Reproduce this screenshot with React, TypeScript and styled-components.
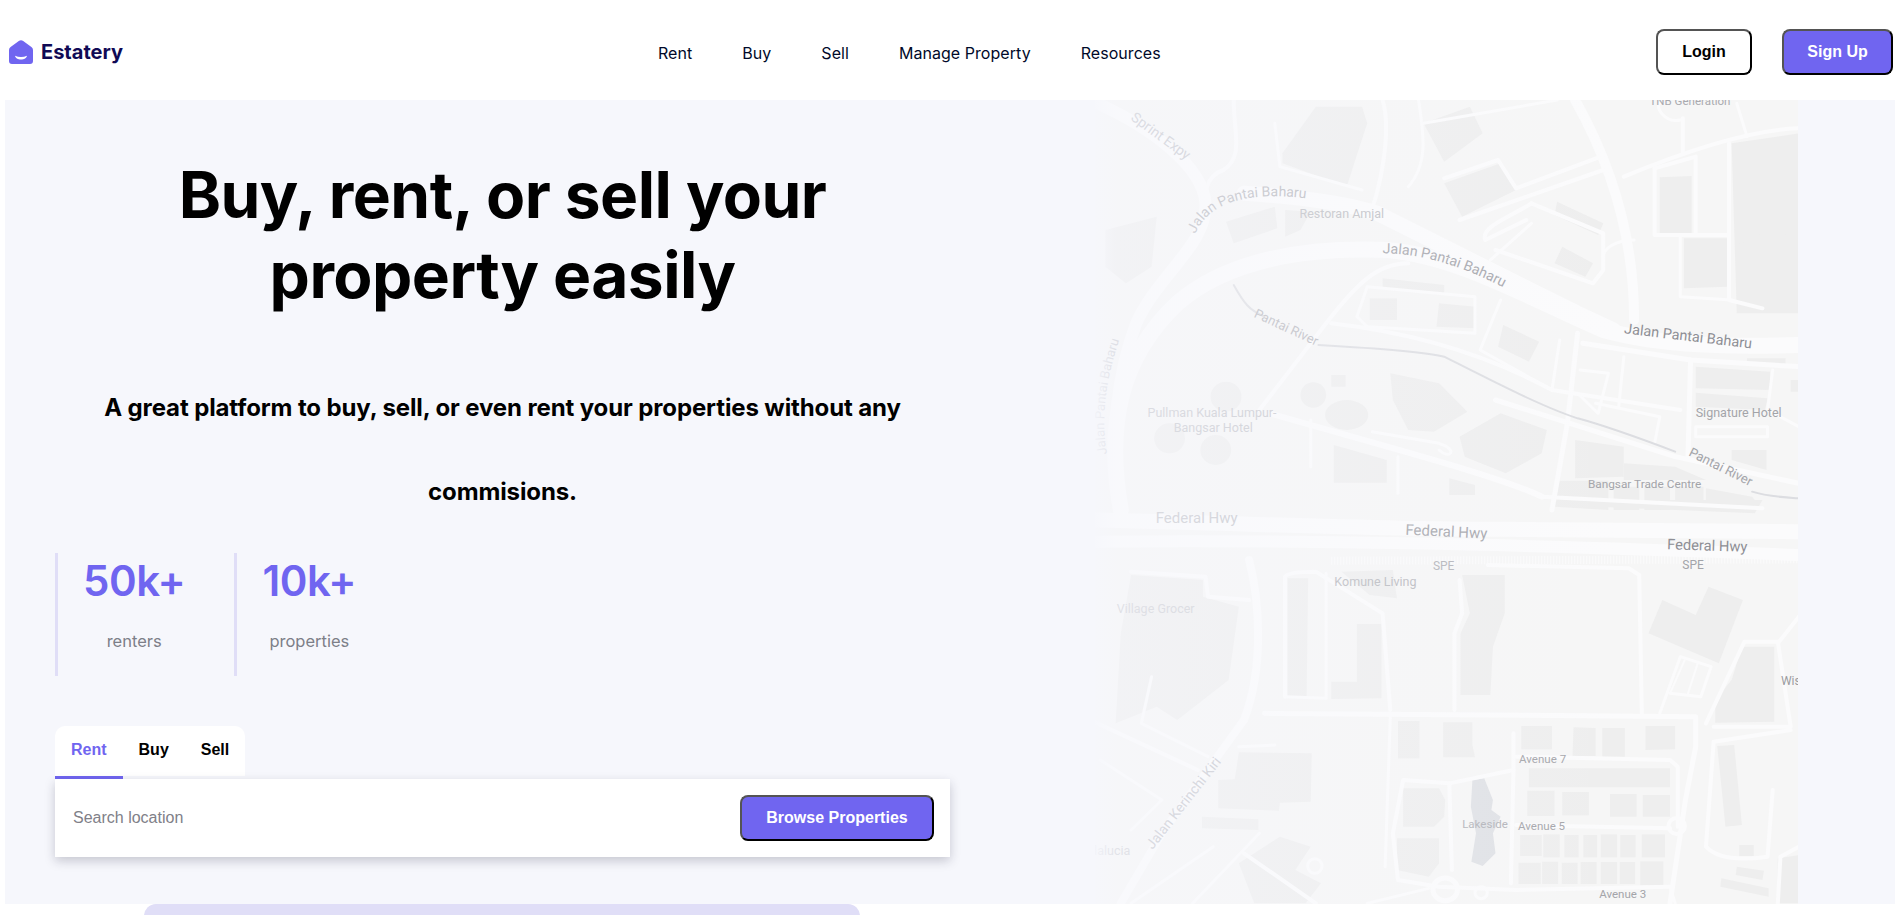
import styled, { createGlobalStyle } from "styled-components";

const GlobalStyle = createGlobalStyle`
    html, body {
        margin: 0;
        padding: 0;
        background: #fff;
        overflow: hidden;
    }
    * {
        box-sizing: border-box;
    }
`;

const Page = styled.div`
    height: 915px;
    overflow: hidden;
    font-family: "Inter", "Noto Sans", sans-serif;
`;

const Header = styled.header`
    display: grid;
    grid-template-columns: 649px 1fr auto;
    align-items: center;
    height: 100px;
    padding: 0 2px 0 9px;
    background: #fff;
`;

const Logo = styled.div`
    display: flex;
    align-items: center;
    gap: 8px;
    margin-top: 4px;
    color: #100a55;
    font-size: 20px;
    font-weight: 700;
`;

const Nav = styled.nav`
    display: flex;
    gap: 50px;
    margin-top: 5px;
    color: #000929;
    font-size: 16px;
    font-weight: 400;
`;

const NavLink = styled.span`
    letter-spacing: 0.05px;
`;

const Actions = styled.div`
    display: flex;
    gap: 30px;
    margin-top: 4px;
`;

const Button = styled.button<{ $primary?: boolean; $width: number }>`
    width: ${(p) => p.$width}px;
    height: 46px;
    border: 2px outset #000;
    border-radius: 8px;
    background: ${(p) => (p.$primary ? "#7065f0" : "#fff")};
    color: ${(p) => (p.$primary ? "#fff" : "#000")};
    font-family: "Liberation Sans", Arial, sans-serif;
    font-size: 16px;
    font-weight: 700;
`;

const Hero = styled.section`
    display: flex;
    height: 804px;
    margin-left: 5px;
    padding-left: 50px;
    background: #f6f7fc;
`;

const Intro = styled.div`
    display: flex;
    flex-direction: column;
    width: 895px;
    margin-right: 145px;
    padding-top: 55px;
`;

const Title = styled.h1`
    margin: 0 0 51px;
    color: #000;
    font-size: 64px;
    font-weight: 700;
    line-height: 80px;
    letter-spacing: -0.55px;
    text-align: center;
`;

const Lead = styled.p`
    margin: 0 0 19px;
    color: #000;
    font-size: 24px;
    font-weight: 700;
    line-height: 84px;
    letter-spacing: -0.12px;
    text-align: center;
`;

const Stats = styled.div`
    display: flex;
    gap: 24px;
    margin-bottom: 50px;
`;

const Stat = styled.div`
    display: flex;
    flex-direction: column;
    align-items: center;
    height: 123px;
    padding: 0 25px;
    border-left: 3px solid #e0def7;
`;

const StatValue = styled.span`
    margin-bottom: 20px;
    color: #7065f0;
    font-size: 42px;
    font-weight: 600;
    line-height: 56px;
    letter-spacing: -0.4px;
`;

const StatLabel = styled.span`
    color: #7d7f88;
    font-size: 16.5px;
    line-height: 24px;
`;

const Tabs = styled.div`
    display: flex;
    align-self: flex-start;
    height: 53px;
    border-radius: 10px 10px 0 0;
    background: #fff;
`;

const Tab = styled.button<{ $active?: boolean }>`
    padding: 0 16px 3px;
    border: 0;
    border-bottom: 3px solid ${(p) => (p.$active ? "#7065f0" : "#f6f7fc")};
    background: none;
    color: ${(p) => (p.$active ? "#7065f0" : "#000")};
    font-family: "Liberation Sans", Arial, sans-serif;
    font-size: 16px;
    font-weight: 700;
`;

const SearchCard = styled.div`
    display: flex;
    align-items: center;
    justify-content: space-between;
    height: 78px;
    padding: 0 16px;
    background: #fff;
    box-shadow: 0 4px 10px rgba(30, 30, 60, 0.22);
`;

const SearchInput = styled.input`
    width: 400px;
    border: 0;
    outline: 0;
    background: none;
    color: #333;
    font-family: "Liberation Sans", Arial, sans-serif;
    font-size: 16px;
    &::placeholder {
        color: #808088;
        opacity: 1;
    }
`;

const PromoStrip = styled.div`
    width: 716px;
    height: 40px;
    margin-left: 144px;
    border-radius: 12px 12px 0 0;
    background: #e0def7;
`;

const MapArt = styled.svg`
    flex: none;
    display: block;
    width: 703px;
    height: 804px;
`;

const SX = 0.5133;
const SY = 1 / 3;

// zoomed reference coords -> svg px
const toSvg = (x: number, y: number, base: number): [number, number] => [x * SX - 5, y * SY + base];

const BUILDINGS_TOP = [
    "650,100 740,50 765,130 690,215",
    "690,280 800,220 830,300 725,380",
    "910,335 1000,400 990,435 905,375",
    "920,470 980,520 965,560 905,520",
    "805,705 875,755 855,815 795,770",
    "1110,262 1172,258 1172,430 1110,430",
    "1157,445 1243,445 1243,590 1157,595",
    "1250,160 1381,130 1381,670 1260,670",
    "1263,460 1305,455 1305,635 1263,635",
    "1305,433 1355,433 1355,585 1305,585",
    "1180,830 1325,845 1325,900 1180,895",
    "1180,908 1320,925 1315,960 1180,950",
    "945,1050 1040,1070 1040,1160 945,1165",
    "1040,1120 1140,1130 1200,1170 1040,1170",
    "910,1172 1010,1172 1010,1260 905,1250",
    "1020,1190 1070,1190 1070,1260 1020,1260",
    "1080,1190 1130,1190 1130,1260 1080,1260",
    "1140,1190 1195,1190 1195,1260 1140,1260",
    "1200,1195 1290,1220 1310,1260 1200,1260",
    "475,1065 578,1110 578,1178 475,1178",
    "585,850 680,880 735,965 670,1025 620,1020 590,930",
    "720,1040 800,970 890,1020 880,1090 810,1150 730,1100",
    "470,855 498,855 498,890 470,890",
    "265,395 360,350 365,415 280,460",
    "380,360 430,365 410,420 380,440",
    "545,625 598,625 598,690 545,690",
    "570,565 690,585 690,610 570,595",
    "680,640 750,650 750,715 675,710",
    "700,1165 750,1185 750,1215 700,1215",
    "30,420 130,380 120,530 70,580 30,530",
    "375,190 440,50 530,50 540,100 500,290 375,220",
    "1250,1080 1318,1080 1318,1140 1250,1110",
    "1280,805 1355,805 1355,830 1280,825",
    "1365,870 1381,870 1381,905 1365,905",
];

const BUILDINGS_BOTTOM = [
    "905,0 1310,0 1295,40 905,15",
    "385,235 425,235 422,588 385,588",
    "470,545 520,545 520,372 568,372 568,595 470,597",
    "490,215 590,210 598,295 545,285",
    "725,225 808,225 808,340 785,440 780,585 722,585 722,400 740,340",
    "1115,300 1180,345 1205,260 1272,300 1225,490 1088,400",
    "1270,440 1333,440 1333,665 1218,668 1218,600 1250,540",
    "600,663 642,663 642,775 600,775",
    "688,667 745,667 745,735 750,772 688,772",
    "840,678 900,678 900,748 840,748",
    "942,682 985,684 985,768 940,768",
    "998,684 1042,684 1042,770 998,770",
    "1082,678 1140,678 1140,748 1082,750",
    "855,805 1130,805 1130,862 855,862",
    "852,872 905,872 905,948 852,948",
    "920,876 972,876 972,946 920,946",
    "1013,882 1065,882 1065,950 1013,950",
    "1077,885 1130,885 1130,950 1077,950",
    "838,1005 880,1005 880,1068 838,1068",
    "883,1003 915,1003 915,1072 883,1072",
    "924,1005 952,1005 952,1072 924,1072",
    "961,1005 988,1005 988,1072 961,1072",
    "995,1003 1027,1003 1027,1072 995,1072",
    "1033,1005 1063,1005 1063,1072 1033,1072",
    "1075,1003 1120,1003 1120,1072 1075,1072",
    "835,1088 878,1088 878,1152 835,1152",
    "881,1085 912,1085 912,1152 881,1152",
    "919,1088 950,1088 950,1152 919,1152",
    "956,1086 987,1086 987,1152 956,1152",
    "995,1086 1027,1086 1027,1152 995,1152",
    "1032,1086 1062,1086 1062,1152 1032,1152",
    "1072,1084 1117,1084 1117,1156 1072,1156",
    "610,865 680,865 692,900 690,950 670,980 610,980",
    "598,1015 680,1015 680,1090 660,1130 598,1110",
    "290,757 432,760 430,905 370,908 368,932 250,925 250,840 282,838",
    "218,950 328,958 328,990 218,985",
    "80,225 220,240 220,290 290,320 270,540 170,660 130,620 50,670 60,400",
    "1222,738 1255,735 1270,975 1238,980",
    "1265,1035 1293,1035 1293,1068 1265,1068",
    "1260,1100 1313,1112 1310,1140 1258,1125",
    "1230,1135 1322,1165 1322,1190 1228,1160",
    "1340,1075 1381,1065 1381,1210 1338,1210",
    "290,1090 370,1010 430,1040 400,1110 450,1150 420,1210 320,1210",
];

const BLOBS_TOP: [number, number, number, number][] = [
    [435, 915, 25, 38],
    [500, 975, 42, 45],
    [265, 920, 30, 45],
    [155, 1045, 30, 45],
    [245, 1080, 30, 45],
];

const ROADS_TOP: [string, number][] = [
    ["M60 1260C30 1000 60 800 170 640C260 520 400 470 580 480C720 500 850 620 1000 720C1120 770 1250 770 1381 765", 16],
    ["M300 310C400 320 500 340 560 370L950 670L1020 720", 15],
    ["M945 30C1000 180 1060 400 1060 690", 10],
    ["M0 30C120 110 220 230 225 340C230 460 130 560 90 700C60 820 30 1050 60 1260", 12],
    ["M570 30C590 130 560 320 550 350", 4],
    ["M280 30C280 130 300 200 260 240C220 260 225 330 225 330", 4],
    ["M640 30C650 130 660 220 620 290", 3],
    ["M650 100L910 30", 3],
    ["M690 265L795 210L830 295L995 200", 4],
    ["M720 390L1000 240", 4],
    ["M1040 260C1150 190 1280 120 1381 115", 4],
    ["M1100 235L1100 435L1245 435", 4],
    ["M1100 235L1180 200L1180 430", 4],
    ["M1245 160L1245 630L1310 655", 4],
    ["M1150 600L1150 620L1250 630", 3],
    ["M1150 440L1150 600", 3],
    ["M1155 190L1155 85", 4],
    ["M1260 40L1280 140", 3],
    ["M860 340L1000 430L1000 540L980 580L790 480", 4],
    ["M860 340C820 380 760 410 770 450L850 390", 4],
    ["M860 400L780 510", 3],
    ["M1060 450C1020 450 1000 480 1000 500", 3],
    ["M620 520C560 520 520 580 460 700L330 960", 4],
    ["M540 590L750 620L750 730L540 710L520 680Z", 3],
    ["M470 700C640 730 780 800 900 900L1150 960", 4],
    ["M800 630L760 780L900 900L915 750", 3],
    ["M950 730L930 1000L900 1260", 5],
    ["M955 840L1010 850L990 970L950 910", 3],
    ["M960 760L1170 810L1381 830", 5],
    ["M1170 810L1165 1100", 5],
    ["M1040 800L1030 950", 3],
    ["M1330 840L1320 960L1381 1010", 3],
    ["M1180 1010L1320 1010L1320 1040L1180 1040Z", 3],
    ["M985 940L1110 980L1100 1060", 3],
    ["M790 930L1140 1100L1381 1180", 5],
    ["M350 970C600 1080 800 1160 880 1220", 6],
    ["M550 1025L680 1060C720 1080 700 1110 680 1080", 3],
    ["M600 1100L600 1210", 3],
    ["M1150 90C1120 100 1100 50 1110 40", 3],
    ["M880 1220L1310 1255", 4],
    ["M360 100L370 230L530 300", 3],
    ["M430 990L430 1130", 3],
];

const ROADS_BOTTOM: [string, number][] = [
    ["M0 60C300 70 600 90 800 88L1381 95", 15],
    ["M0 125C400 120 800 130 1381 165", 12],
    ["M310 180C330 300 340 500 300 660L140 1000L60 1210", 8],
    ["M340 640L1180 650L1180 740L1160 900L1130 1210", 5],
    ["M380 590L380 230Q385 215 440 215L570 340L585 630", 4],
    ["M380 590L460 595L460 220", 3],
    ["M775 195L1050 205L1070 225L1075 640", 4],
    ["M720 240L725 340L710 400L710 630", 4],
    ["M585 650L575 1100", 3],
    ["M825 700L825 810L700 850L610 840L590 1000L600 1140L680 1160L830 1170L1130 1160", 4],
    ["M825 810L820 1150", 4],
    ["M700 850L705 1110", 4],
    ["M830 770L1130 780L1145 800L1145 980", 4],
    ["M830 975L1130 985", 4],
    ["M1110 640L1150 470L1210 500L1190 590L1130 580", 3],
    ["M1160 475L1130 580M1185 485L1165 580", 2],
    ["M1200 670L1275 425L1340 425L1365 680L1215 680", 4],
    ["M1340 430L1381 350", 4],
    ["M1215 725L1200 1040Q1230 1090 1320 1070L1330 870", 4],
    ["M1215 725L1365 690", 4],
    ["M1340 1210L1345 1070L1381 1040", 4],
    ["M80 215L225 230L230 290L310 300", 4],
    ["M120 530L100 670L230 770", 3],
    ["M0 660L210 810", 4],
    ["M20 780L140 900L80 990", 3],
    ["M290 740L360 735", 3],
    ["M240 1040L80 1210", 3],
    ["M330 1000L200 1210", 3],
    ["M1130 1160L1140 1210", 3],
    ["M540 1210L660 1165", 3],
    ["M300 1060L440 1210", 4],
];

const RIVER = [
    "M280 585C300 640 310 660 340 680",
    "M445 765C560 775 650 785 690 800C780 870 880 950 950 985C1010 1010 1080 1050 1140 1085",
    "M1290 1205C1320 1220 1350 1222 1381 1225",
];

interface ILabel {
    text: string;
    from: [number, number];
    to: [number, number];
    curve?: [number, number];
    base: number;
    size: number;
    shade: string;
}

const LABELS: ILabel[] = [
    { text: "TNB Generation", from: [1090, 46], to: [1300, 46], base: -10, size: 11.5, shade: "#a9aaaf" },
    { text: "Sprint Expy", from: [78, 88], to: [240, 270], base: -10, size: 14, shade: "#c4c5cc" },
    { text: "Jalan Pantai Baharu", from: [205, 432], to: [480, 340], curve: [250, 270], base: -10, size: 14, shade: "#b6b7bd" },
    { text: "Restoran Amjal", from: [408, 385], to: [640, 385], base: -10, size: 12.5, shade: "#bcbdc2" },
    { text: "Jalan Pantai Baharu", from: [570, 490], to: [860, 640], curve: [700, 490], base: -10, size: 14.2, shade: "#a3a4aa" },
    { text: "Pantai River", from: [318, 680], to: [520, 825], base: -10, size: 13, shade: "#b6b7bd" },
    { text: "Jalan Pantai Baharu", from: [1040, 730], to: [1380, 792], base: -10, size: 14.4, shade: "#8e8f95" },
    { text: "Jalan Pantai Baharu", from: [33, 1092], to: [85, 640], curve: [10, 900], base: -10, size: 13, shade: "#c6c7ce" },
    { text: "Pullman Kuala Lumpur-", from: [112, 982], to: [450, 982], base: -10, size: 12.5, shade: "#c4c5cb" },
    { text: "Bangsar Hotel", from: [163, 1026], to: [400, 1026], base: -10, size: 12.5, shade: "#c4c5cb" },
    { text: "Signature Hotel", from: [1180, 980], to: [1381, 980], base: -10, size: 12.5, shade: "#a3a4a9" },
    { text: "Pantai River", from: [1165, 1096], to: [1386, 1266], base: -10, size: 13, shade: "#a3a4a9" },
    { text: "Bangsar Trade Centre", from: [970, 1194], to: [1300, 1194], base: -10, size: 11.8, shade: "#a3a4a9" },
    { text: "Federal Hwy", from: [128, 70], to: [340, 70], base: 400, size: 15, shade: "#c2c3c9" },
    { text: "Federal Hwy", from: [614, 104], to: [830, 120], base: 400, size: 15, shade: "#a3a4aa" },
    { text: "Federal Hwy", from: [1124, 148], to: [1381, 160], base: 400, size: 14.7, shade: "#8e8f95" },
    { text: "SPE", from: [668, 209], to: [760, 209], base: 400, size: 12, shade: "#b0b1b6" },
    { text: "SPE", from: [1154, 206], to: [1240, 206], base: 400, size: 12, shade: "#a3a4a9" },
    { text: "Komune Living", from: [476, 258], to: [700, 258], base: 400, size: 12.5, shade: "#b6b7bc" },
    { text: "Village Grocer", from: [52, 340], to: [270, 340], base: 400, size: 12.5, shade: "#cacbd1" },
    { text: "Wis", from: [1346, 554], to: [1400, 554], base: 400, size: 12, shade: "#9a9ba0" },
    { text: "Jalan Kerinchi Kiri", from: [122, 1050], to: [300, 700], base: 400, size: 14, shade: "#c2c3ca" },
    { text: "Avenue 7", from: [836, 788], to: [980, 788], base: 400, size: 11.5, shade: "#a3a4a9" },
    { text: "Lakeside", from: [725, 985], to: [830, 985], base: 400, size: 11.5, shade: "#b0b1b7" },
    { text: "Avenue 5", from: [834, 989], to: [980, 989], base: 400, size: 11.5, shade: "#a3a4a9" },
    { text: "Avenue 3", from: [992, 1194], to: [1130, 1194], base: 400, size: 11.5, shade: "#a3a4a9" },
    { text: "lalucia", from: [8, 1066], to: [120, 1066], base: 400, size: 12.5, shade: "#cdced4" },
];

function MapLabel({ label, id }: { label: ILabel; id: string }) {
    const [x1, y1] = toSvg(label.from[0], label.from[1], label.base);
    const [x2, y2] = toSvg(label.to[0], label.to[1], label.base);
    const curve = label.curve ? toSvg(label.curve[0], label.curve[1], label.base) : null;
    const d = curve ? `M${x1} ${y1}Q${curve[0]} ${curve[1]} ${x2} ${y2}` : `M${x1} ${y1}L${x2} ${y2}`;

    return (
        <>
            <path id={id} d={d} fill="none" />
            <text fill={label.shade} fontSize={label.size} fontFamily='"Liberation Sans Narrow", Roboto, sans-serif'>
                <textPath href={`#${id}`}>{label.text}</textPath>
            </text>
        </>
    );
}

function MapBackdrop() {
    const top = `translate(-5,-10) scale(${SX},${SY})`;
    const bottom = `translate(-5,400) scale(${SX},${SY})`;

    return (
        <MapArt viewBox="0 0 703 804">
            <defs>
                <linearGradient id="fade" x1="0" x2="1" y1="0" y2="0">
                    <stop offset="0" stopColor="#f6f7fc" stopOpacity="0.9" />
                    <stop offset="0.03" stopColor="#f6f7fc" stopOpacity="0.5" />
                    <stop offset="0.4" stopColor="#f6f7fc" stopOpacity="0.22" />
                    <stop offset="0.75" stopColor="#f6f7fc" stopOpacity="0" />
                </linearGradient>
                <clipPath id="sheet">
                    <rect width="703" height="804" />
                </clipPath>
            </defs>
            <g clipPath="url(#sheet)">
                <rect width="703" height="804" fill="#f6f6f6" />
                <g transform={top} fill="#eeeeee">
                    {BUILDINGS_TOP.map((pts) => (
                        <polygon key={pts} points={pts} />
                    ))}
                    {BLOBS_TOP.map(([cx, cy, rx, ry]) => (
                        <ellipse key={`${cx}-${cy}`} cx={cx} cy={cy} rx={rx} ry={ry} />
                    ))}
                </g>
                <g transform={bottom} fill="#eeeeee">
                    {BUILDINGS_BOTTOM.map((pts) => (
                        <polygon key={pts} points={pts} />
                    ))}
                    <polygon
                        fill="#dfe1e5"
                        points="745,840 768,835 785,900 782,930 800,950 785,1000 790,1060 765,1098 743,1085 752,1000 742,920"
                    />
                </g>
                <g transform={top} fill="none" stroke="#fbfbfc" strokeLinejoin="round" strokeLinecap="round">
                    {ROADS_TOP.map(([d, w]) => (
                        <path key={d} d={d} strokeWidth={w} vectorEffect="non-scaling-stroke" />
                    ))}
                    {RIVER.map((d) => (
                        <path key={d} d={d} stroke="#dcdde1" strokeWidth={2} vectorEffect="non-scaling-stroke" />
                    ))}
                </g>
                <g transform={bottom} fill="none" stroke="#fbfbfc" strokeLinejoin="round" strokeLinecap="round">
                    {ROADS_BOTTOM.map(([d, w]) => (
                        <path key={d} d={d} strokeWidth={w} vectorEffect="non-scaling-stroke" />
                    ))}
                    <ellipse cx={1143} cy={978} rx={16} ry={24} strokeWidth={4} vectorEffect="non-scaling-stroke" />
                    <ellipse cx={692} cy={1168} rx={24} ry={34} strokeWidth={5} vectorEffect="non-scaling-stroke" />
                    <ellipse cx={762} cy={1178} rx={12} ry={18} strokeWidth={3} vectorEffect="non-scaling-stroke" />
                    <ellipse cx={438} cy={1098} rx={14} ry={22} strokeWidth={3} vectorEffect="non-scaling-stroke" />
                    <path
                        d="M470 182L1381 178"
                        strokeWidth={8}
                        strokeDasharray="1 2"
                        strokeLinecap="butt"
                        vectorEffect="non-scaling-stroke"
                    />
                </g>
                {LABELS.map((label, i) => (
                    <MapLabel key={`${label.text}-${i}`} label={label} id={`street-${i}`} />
                ))}
                <rect width="703" height="804" fill="url(#fade)" />
            </g>
        </MapArt>
    );
}

function App() {
    return (
        <Page>
            <GlobalStyle />
            <Header>
                <Logo>
                    <svg width="24" height="24" viewBox="0 0 24 24">
                        <path
                            d="M9.800 1a3.600 3.600 0 0 1 4.400 0l8.200 6A3.800 3.800 0 0 1 24 10v11a3 3 0 0 1-3 3H3a3 3 0 0 1-3-3V10a3.800 3.800 0 0 1 1.600-3Z"
                            fill="#7065f0"
                        />
                        <path d="M6 15.800c3.800 1.700 8.200 1.700 12 0-.3 2.400-3 3.700-6 3.700s-5.700-1.300-6-3.700Z" fill="#fff" />
                    </svg>
                    Estatery
                </Logo>
                <Nav>
                    <NavLink>Rent</NavLink>
                    <NavLink>Buy</NavLink>
                    <NavLink>Sell</NavLink>
                    <NavLink>Manage Property</NavLink>
                    <NavLink>Resources</NavLink>
                </Nav>
                <Actions>
                    <Button $width={96}>Login</Button>
                    <Button $primary $width={111}>
                        Sign Up
                    </Button>
                </Actions>
            </Header>
            <Hero>
                <Intro>
                    <Title>
                        Buy, rent, or sell your
                        <br />
                        property easily
                    </Title>
                    <Lead>
                        A great platform to buy, sell, or even rent your properties without any
                        <br />
                        commisions.
                    </Lead>
                    <Stats>
                        <Stat>
                            <StatValue>50k+</StatValue>
                            <StatLabel>renters</StatLabel>
                        </Stat>
                        <Stat>
                            <StatValue>10k+</StatValue>
                            <StatLabel>properties</StatLabel>
                        </Stat>
                    </Stats>
                    <Tabs>
                        <Tab $active>Rent</Tab>
                        <Tab>Buy</Tab>
                        <Tab>Sell</Tab>
                    </Tabs>
                    <SearchCard>
                        <SearchInput placeholder="Search location" />
                        <Button $primary $width={194}>
                            Browse Properties
                        </Button>
                    </SearchCard>
                </Intro>
                <MapBackdrop />
            </Hero>
            <PromoStrip />
        </Page>
    );
}

export default App;
